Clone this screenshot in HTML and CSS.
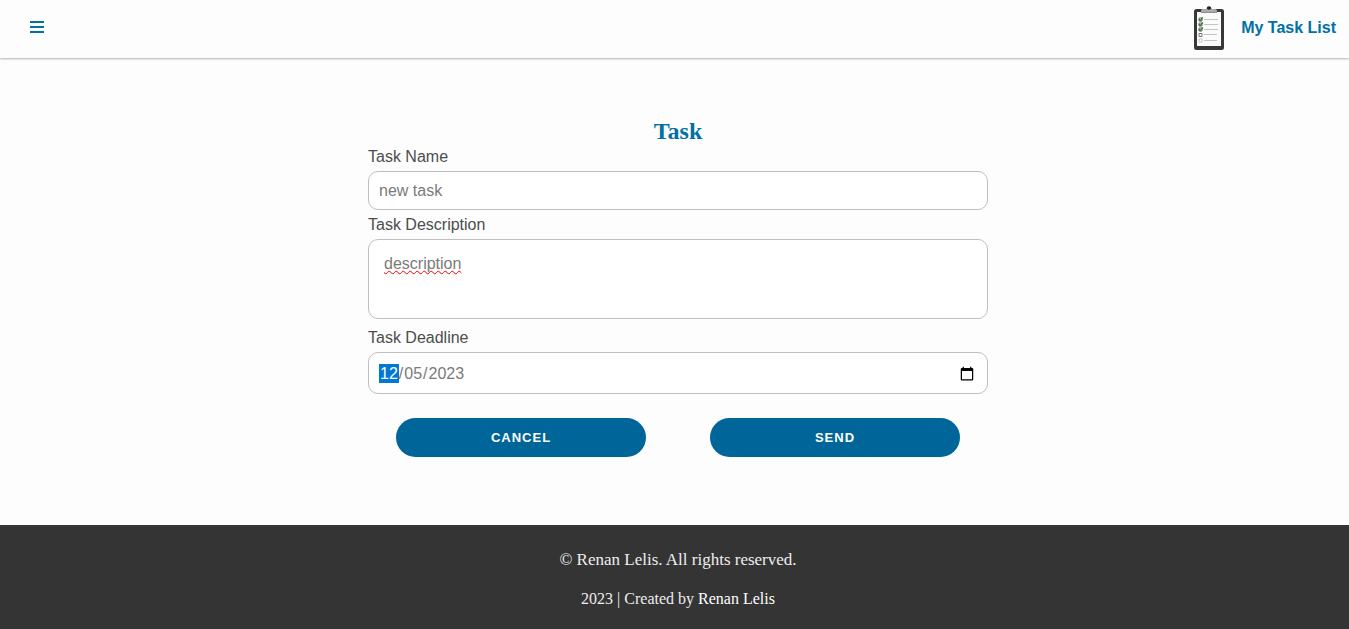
FILE: index.html
```html
<!DOCTYPE html>
<html lang="en">
<head>
<meta charset="utf-8">
<title>My Task List</title>
<link rel="stylesheet" href="styles.css">
</head>
<body>
<header class="header">
  <button class="menu" type="button" aria-label="Menu">
    <svg width="14" height="12" viewBox="0 0 14 12" shape-rendering="crispEdges"><path fill="currentColor" d="M0 0h14v2H0zM0 5h14v2H0zM0 10h14v2H0z"/></svg>
  </button>
  <a class="brand" href="#">
    <svg class="logo" width="32" height="44" viewBox="0 0 32 44" aria-hidden="true">
      <rect x="1" y="3" width="30" height="41" rx="2.500" fill="#38383a"/>
      <rect x="4" y="6" width="24" height="34" fill="#fbfbfb"/>
      <path d="M8 7V4.500Q8 3 10 3h3l1-1.500h4L19 3h3q2 0 2 1.500V7z" fill="#a9abad"/>
      <path d="M8 6h16v1H8z" fill="#8a8c8e"/>
      <ellipse cx="16" cy="2" rx="2.200" ry="1.800" fill="#222"/>
      <path d="M11 13.500h14M11 18.500h14M11 23.500h14M11 28.500h13M11 34.500h13" stroke="#c4c4c4"/>
      <path d="M6 12h3v3H6zM6 17h3v3H6zM6 22h3v3H6zM6 27.500h3v3H6z" fill="#fff" stroke="#777"/>
      <path d="M6 33h3v3H6z" fill="#fff" stroke="#c8c8c8"/>
      <path d="M6 13.300l1.300 1.300 2.500-3.300M6 18.300l1.300 1.300 2.500-3.300M6 23.300l1.300 1.300 2.500-3.300" fill="none" stroke="#36702a" stroke-width="1.300"/>
    </svg>
    <span>My Task List</span>
  </a>
</header>
<main class="main">
  <form class="form">
    <h1 class="title">Task</h1>
    <label class="label" for="name">Task Name</label>
    <input class="field" id="name" type="text" value="new task">
    <label class="label" for="description">Task Description</label>
    <textarea class="field area" id="description">description</textarea>
    <label class="label" for="deadline">Task Deadline</label>
    <input class="field date" id="deadline" type="date" value="2023-12-05">
    <div class="actions">
      <button class="button" type="button">CANCEL</button>
      <button class="button" type="submit">SEND</button>
    </div>
  </form>
</main>
<footer class="footer">
  <p class="rights">© Renan Lelis. All rights reserved.</p>
  <p class="credit">2023 | Created by <a href="#">Renan Lelis</a></p>
</footer>
</body>
</html>
```
FILE: styles.css
```css
* { box-sizing: border-box; }

body {
  margin: 0;
  min-height: 100vh;
  display: flex;
  flex-direction: column;
  background: #fdfdfd;
  font-family: "Liberation Sans", Arial, sans-serif;
  font-size: 16px;
}

.header {
  display: flex;
  justify-content: space-between;
  align-items: center;
  height: 58px;
  padding: 0 13px 3px 30px;
  box-shadow: 0 1px 2px rgba(0, 0, 0, 0.3);
}

.menu {
  display: flex;
  padding: 0 0 2px;
  border: 0;
  background: none;
  color: #0070a5;
}

.brand {
  display: flex;
  align-items: center;
  gap: 16px;
  color: #0070a5;
  font-weight: bold;
  text-decoration: none;
}

.main {
  flex: 1;
  padding: 58px 0 67px 7px;
}

.form {
  display: flex;
  flex-direction: column;
  width: 100%;
  max-width: 620px;
  margin: 0 auto;
}

.title {
  margin: 0 0 1px;
  color: #0070a5;
  font-family: "Liberation Serif", "Times New Roman", serif;
  font-size: 24px;
  line-height: 30px;
  text-align: center;
}

.label {
  color: #4d4d4d;
  line-height: 20px;
  margin-bottom: 4px;
}

.field {
  width: 100%;
  height: 39px;
  margin: 0 0 5px;
  padding: 0 10px;
  border: 1px solid #bfbfbf;
  border-radius: 10px;
  background: #fff;
  color: #7a7a7a;
  font: inherit;
}

.area {
  height: 80px;
  margin-bottom: 9px;
  padding: 15px;
  resize: none;
  text-decoration: underline wavy #f00 1px;
  text-decoration-skip-ink: none;
  text-underline-offset: 1px;
}

.date {
  height: 42px;
  margin-bottom: 24px;
  padding-top: 2px;
}

.date::-webkit-datetime-edit-month-field {
  background: #0078d7;
  color: #fff;
}

.actions {
  display: flex;
  justify-content: center;
  gap: 64px;
}

.button {
  width: 250px;
  height: 39px;
  border: 0;
  border-radius: 20px;
  background: #006699;
  color: #fff;
  font: bold 13px "Liberation Sans", Arial, sans-serif;
  letter-spacing: 1px;
}

.footer {
  padding: 25px 0 20px 7px;
  background: #343434;
  color: #eee;
  font-family: "Liberation Serif", "Times New Roman", serif;
  line-height: 20px;
  text-align: center;
}

.rights {
  margin: 0 0 19px;
  font-size: 17px;
}

.credit { margin: 0; }

.credit a {
  color: #fff;
  text-decoration: none;
}
```
